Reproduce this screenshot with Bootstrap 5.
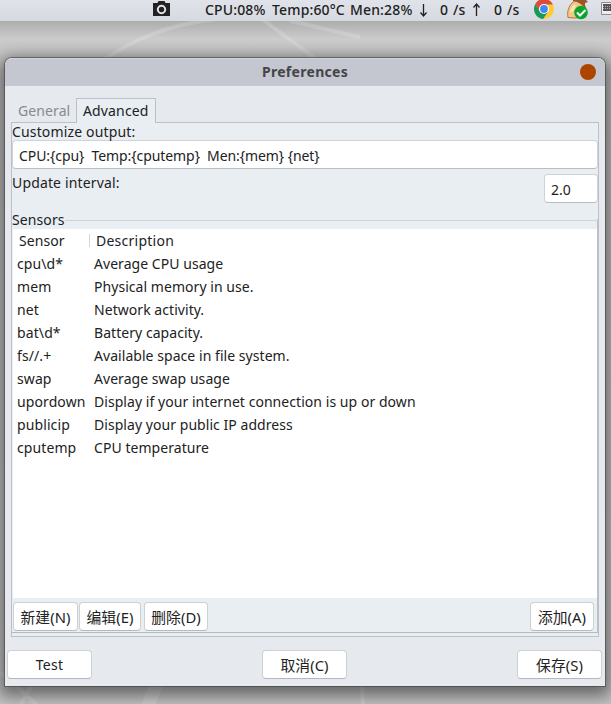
<!DOCTYPE html>
<html lang="en">
<head>
<meta charset="utf-8">
<title>Preferences</title>
<link rel="stylesheet" href="https://cdn.jsdelivr.net/npm/bootstrap@5.3.0/dist/css/bootstrap.min.css">
<style>
body{width:611px;height:704px;background:#b4b4b4;font:14px/18px "Noto Sans","Noto Sans CJK SC",sans-serif;color:#222;letter-spacing:.05px}
.desk{height:704px}
.wall{left:0;top:0;z-index:0}
.topbar{height:21px;background:linear-gradient(#e0e3e9,#d6d9e0);z-index:2;line-height:20px;padding-left:153px;font-weight:500;white-space:nowrap;letter-spacing:.15px}
.seg{flex:none;white-space:pre}
.t1{width:67px}.t2{width:78px}.t3{width:64px}.t4{width:14px;padding-left:1px}.t5{width:15px}
.dialog{width:600px;height:628px;margin:37px 0 0 5px;background:#e6e9ee;border-radius:7px 7px 0 0;box-shadow:0 0 0 1px rgba(60,60,60,.55),0 5px 16px 5px rgba(0,0,0,.48);z-index:1}
.titlebar{height:28px;background:#c4c7cf;border-radius:7px 7px 0 0;border-top:1px solid #d0d3d9;padding-bottom:2px;font-weight:700;color:#454549;letter-spacing:.3px}
.closer{width:16px;height:16px;background:#ad4500;right:9px;top:5px}
.tabs{height:37px;padding:12px 0 0 6px}
.tab-off{width:65px;padding:4px 0 0 7px;color:#888b8f;letter-spacing:.1px}
.tab-on{width:80px;height:25px;margin-bottom:-1px;padding:3px 0 0 6px;background:#e9eef2;border:1px solid #bdc1c7;border-bottom:0;position:relative;letter-spacing:.15px}
.panel{width:588px;height:515px;margin:-1px 0 0 6px;border:1px solid #bdc1c7;background:#e9eef2}
.lab1{height:17px;letter-spacing:.15px}
.lab2{letter-spacing:.15px}
.field{border:1px solid #cfd3d6;border-bottom-color:#b9bdc1;border-radius:4px;background:#fff;height:29px;padding:6px 0 0 6px}
.f1{width:586px;letter-spacing:-.07px}
.f2{width:54px}
.iv{padding-top:5px;height:43px}
.leg{height:15px;line-height:15px}
.legend-line{height:1px;background:#cfd3d6;margin-top:1px}
.frame{height:414px;margin-top:-8px;padding-top:10px;border-right:1px solid #bdc1c7;border-bottom:1px solid #b4b9be}
.list{height:369px;background:#fff;margin-left:1px}
.line{height:23px;line-height:23px;white-space:nowrap}
.c1{width:81px;padding-left:4px}
.head .c1{width:76px;padding-left:6px}
.head .c2{border-left:1px solid #d4d6d8;line-height:13px;height:13px;padding-left:6px;letter-spacing:.25px}
.acts{padding:4px 3px 0 1px}
.push{height:29px;padding:0;border:1px solid #cdd1d6;border-bottom-color:#b5b9bf;border-radius:4px;background:#fff;color:#222;font-size:14.800px;line-height:28px;letter-spacing:.05px}
.wide{width:85px}
.b1{width:65px}.b2{width:62px;margin-left:1px}.b3{width:64px;margin-left:3px}.b4{width:64px}
.foot{padding:13px 3px 0 2px}
.test{font-size:14px;letter-spacing:.3px}
.mix{letter-spacing:.1px}
</style>
<script src="https://cdn.jsdelivr.net/npm/bootstrap@5.3.0/dist/js/bootstrap.bundle.min.js"></script>
</head>
<body class="overflow-hidden">
<div class="desk position-relative overflow-hidden">
<svg class="wall position-absolute" width="611" height="704">
<defs><linearGradient id="w" x2="0" y2="1"><stop offset="0" stop-color="#a9a9a9"/><stop offset=".03" stop-color="#adadad"/><stop offset=".055" stop-color="#cbcbcb"/><stop offset=".1" stop-color="#bdbdbd"/><stop offset="1" stop-color="#c4c4c4"/></linearGradient></defs>
<path fill="url(#w)" d="M0 0h611v704H0z"/>
<g fill="none" stroke="#fff" stroke-opacity=".16" stroke-width="4"><path d="M104 60Q150 27 215 19M262 19L320 62M290 21L360 37M0 672L36 704M21 704L35 680M361 675L363 704"/><path stroke-width="13" d="M148 706L160 675"/></g>
</svg>
<header class="topbar position-relative d-flex">
<svg class="seg" width="52" height="20" viewBox="0 0 52 20"><path fill="#222" d="M0 3h4.500l1-2h6l1 2H17v13H0V3z"/><circle cx="8.500" cy="9.500" r="3.700" fill="none" stroke="#e1e3e8" stroke-width="2"/></svg>
<span class="seg t1">CPU:08%</span><span class="seg t2">Temp:60°C</span><span class="seg t3">Men:28%</span>
<svg class="seg" width="25" height="20"><path fill="none" stroke="#222" stroke-width="1.300" d="M9.500 4v12M6.500 12.500l3 3.500 3-3.500"/></svg>
<span class="seg t4">0</span><span class="seg t5">/s</span>
<svg class="seg" width="25" height="20"><path fill="none" stroke="#222" stroke-width="1.300" d="M8.500 16V4M5.500 7.500l3-3.500 3 3.500"/></svg>
<span class="seg t4">0</span><span class="seg t5">/s</span>
<svg class="seg" width="89" height="21" viewBox="522 0 89 21">
<circle cx="544" cy="9" r="10" fill="#fc3"/><path fill="#dd4b3e" d="M535.300 4A10 10 0 0 1 552.900 4.500H544L539.700 11.500z"/><path fill="#149a5b" d="M535.300 4A10 10 0 0 0 543 19L548.300 11.500H539.700z"/><circle cx="544" cy="9" r="5" fill="#fff"/><circle cx="544" cy="9" r="3.900" fill="#4285f4"/>
<path fill="#f1c885" stroke="#b97831" d="M573 2C568 7 567 12 568 17.500l7 .5C583 18 588 11 585 6L577 0z"/><path fill="#fae3b5" d="M573 5q-3 4-3 8q5-2 6-8z"/><path fill="#995526" d="M573-1h12l3 3-3 1 0 5Q580 2 573 1z"/><circle cx="581" cy="12.500" r="6.800" fill="#0aa528"/><path fill="none" stroke="#fff" stroke-width="2" d="M577 12.500l3 3 5.500-5.500"/>
<path fill="#eee" stroke="#8d8d8d" d="M601.500 2.500h12v12h-12z"/><path fill="#555" d="M603 4h8v7h-8z"/><path stroke="#aaa" stroke-dasharray="1 1" d="M603 6.500h8M603 8.500h8"/>
</svg>
</header>
<main class="dialog position-relative">
<div class="titlebar position-relative d-flex align-items-center justify-content-center"><span>Preferences</span><i class="closer position-absolute rounded-circle"></i></div>
<div class="tabs d-flex"><div class="tab-off">General</div><div class="tab-on">Advanced</div></div>
<section class="panel">
<div class="lab1">Customize output:</div>
<div class="field f1">CPU:{cpu}&nbsp; Temp:{cputemp}&nbsp; Men:{mem} {net}</div>
<div class="d-flex justify-content-between iv"><span class="lab2">Update interval:</span><div class="field f2">2.0</div></div>
<div class="d-flex align-items-center leg"><span class="mix">Sensors</span><div class="legend-line flex-grow-1"></div></div>
<div class="frame">
<div class="list">
<div class="line head d-flex align-items-center"><span class="c1">Sensor</span><span class="c2">Description</span></div>
<div class="line d-flex"><span class="c1 mix">cpu\d*</span><span>Average CPU usage</span></div>
<div class="line d-flex"><span class="c1 mix">mem</span><span>Physical memory in use.</span></div>
<div class="line d-flex"><span class="c1 mix">net</span><span>Network activity.</span></div>
<div class="line d-flex"><span class="c1 mix">bat\d*</span><span>Battery capacity.</span></div>
<div class="line d-flex"><span class="c1 mix">fs//.+</span><span>Available space in file system.</span></div>
<div class="line d-flex"><span class="c1 mix">swap</span><span>Average swap usage</span></div>
<div class="line d-flex"><span class="c1 mix">upordown</span><span>Display if your internet connection is up or down</span></div>
<div class="line d-flex"><span class="c1 mix">publicip</span><span>Display your public IP address</span></div>
<div class="line d-flex"><span class="c1 mix">cputemp</span><span>CPU temperature</span></div>
</div>
<div class="d-flex acts"><button class="btn push b1">新建(N)</button><button class="btn push b2">编辑(E)</button><button class="btn push b3">删除(D)</button><button class="btn push b4 ms-auto">添加(A)</button></div>
</div>
</section>
<footer class="d-flex justify-content-between foot"><button class="btn push wide test">Test</button><button class="btn push wide">取消(C)</button><button class="btn push wide">保存(S)</button></footer>
</main>
</div>
</body>
</html>
